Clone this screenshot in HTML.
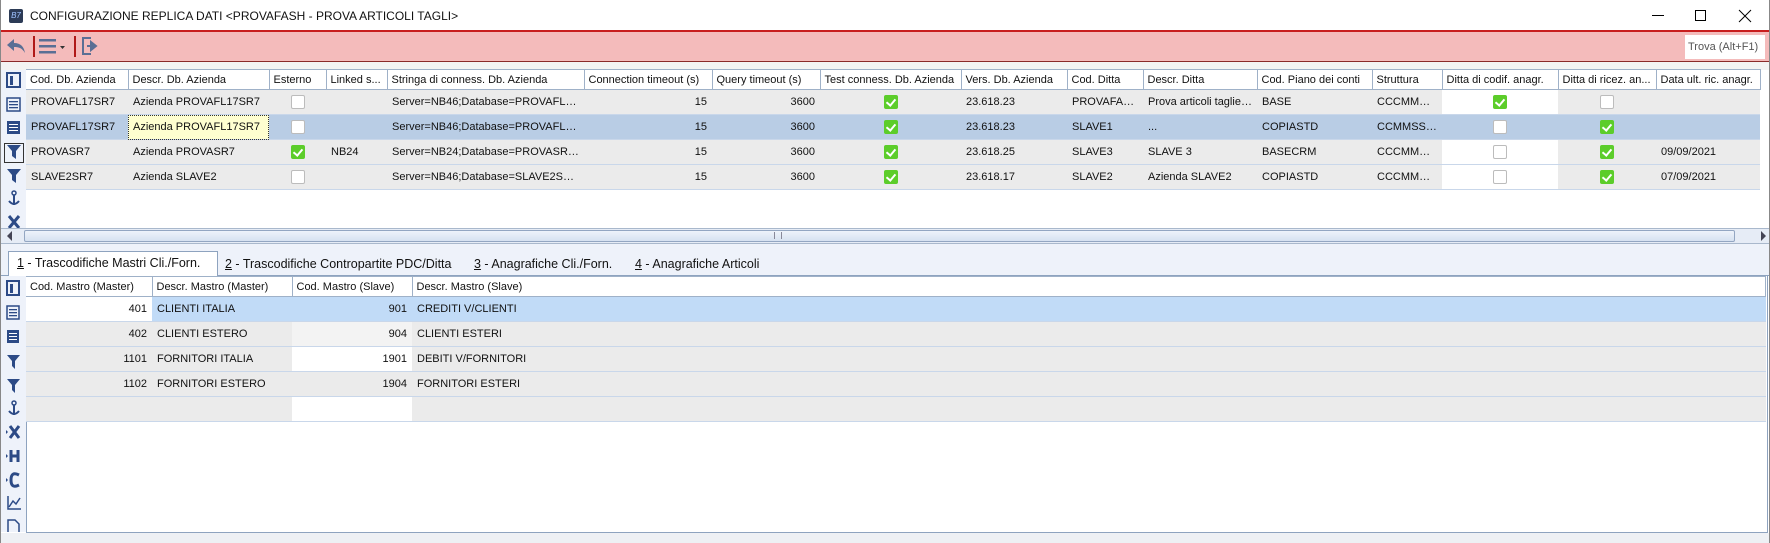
<!DOCTYPE html>
<html><head><meta charset="utf-8"><style>
*{margin:0;padding:0;box-sizing:border-box}
body{width:1770px;height:543px;overflow:hidden;background:#fff;font-family:"Liberation Sans",sans-serif;font-size:11px;color:#111;position:relative}
.abs{position:absolute;white-space:nowrap}
table{border-collapse:collapse;table-layout:fixed;position:absolute}
td{height:25px;padding:0 5px;white-space:nowrap;overflow:hidden;text-overflow:ellipsis;border-bottom:1px solid #c9d7ea;background:#ebebeb}
th{height:20px;padding:0 4px;text-align:left;font-weight:normal;white-space:nowrap;overflow:hidden;text-overflow:ellipsis;background:#fff;border-right:1px solid #9fb1c8;border-bottom:1px solid #9fb1c8;border-top:1px solid #9fb1c8}
.r{text-align:right}.c{text-align:center}
tr.sel td{background:#b9cde5}
td.w{background:#fff}
.cb{display:inline-block;width:14px;height:14px;border:1px solid #bcbcbc;background:#fff;border-radius:2px;vertical-align:middle}
.ck{display:inline-block;width:14px;height:14px;background:#5ccd2a;border-radius:2px;vertical-align:middle;position:relative}
.ck:after{content:"";position:absolute;left:4px;top:2px;width:4px;height:7px;border:solid #fff;border-width:0 2px 2px 0;transform:rotate(40deg)}
</style></head><body>
<div class="abs" style="left:9px;top:9px;width:14px;height:14px;background:#2c3b56;border-radius:2px;color:#9fc3ff;font-size:8px;line-height:14px;text-align:center;font-style:italic">B7</div>
<div class="abs" style="left:30px;top:9px;font-size:12px">CONFIGURAZIONE REPLICA DATI &lt;PROVAFASH - PROVA ARTICOLI TAGLI&gt;</div>
<div class="abs" style="left:1652px;top:15px;width:12px;height:1px;background:#000"></div>
<div class="abs" style="left:1695px;top:10px;width:11px;height:11px;border:1px solid #000"></div>
<svg class="abs" style="left:1738px;top:9px" width="14" height="14"><path d="M1 1L13 13M13 1L1 13" stroke="#000" stroke-width="1"/></svg>
<div class="abs" style="left:0;top:30px;width:1770px;height:32px;background:#f4bbbb;border-top:2px solid #c81e1e;border-bottom:1px solid #8a2a2a;border-left:1px solid #c81e1e;border-right:1px solid #c81e1e"></div>
<svg class="abs" style="left:5px;top:37px" width="22" height="18"><path d="M9 2L2 8L9 14V10C14 10 17 11 20 16C19 10 16 6 9 6Z" fill="#5a6f95"/></svg>
<div class="abs" style="left:33px;top:36px;width:2px;height:21px;background:#b01818"></div>
<svg class="abs" style="left:39px;top:38px" width="28" height="16"><rect x="0" y="1" width="17" height="2.5" fill="#5a6f95"/><rect x="0" y="7" width="17" height="2.5" fill="#5a6f95"/><rect x="0" y="13" width="17" height="2.5" fill="#5a6f95"/><path d="M21 8h5l-2.5 3z" fill="#333"/></svg>
<div class="abs" style="left:74px;top:36px;width:2px;height:21px;background:#b01818"></div>
<svg class="abs" style="left:80px;top:36px" width="20" height="20"><path d="M11 2H3V18H11" fill="none" stroke="#5a6f95" stroke-width="2"/><path d="M7 10H14M11 6L16 10L11 14Z" fill="#5a6f95" stroke="#5a6f95" stroke-width="2"/></svg>
<div class="abs" style="left:1685px;top:35px;width:80px;height:24px;background:#fff;color:#555;font-size:11px;line-height:24px;padding-left:3px">Trova (Alt+F1)</div>
<div class="abs" style="left:0;top:62px;width:1770px;height:8px;background:#f3f3f3"></div>
<div class="abs" style="left:0;top:70px;width:26px;height:160px;background:#eef2fa"></div>
<div class="abs" style="left:4px;top:143px;width:20px;height:20px;border:1px solid #333"></div>
<svg class="abs" style="left:0;top:70px" width="26" height="160" fill="#2c4a86">
<rect x="7" y="3" width="13" height="14" fill="none" stroke="#2c4a86" stroke-width="2"/><rect x="10" y="6" width="3" height="9"/>
<rect x="7" y="28" width="13" height="13" fill="none" stroke="#2c4a86" stroke-width="1.5"/><rect x="9" y="31" width="9" height="1.3"/><rect x="9" y="34" width="9" height="1.3"/><rect x="9" y="37" width="9" height="1.3"/>
<rect x="7" y="51" width="13" height="13"/><rect x="9" y="54" width="9" height="1" fill="#fff"/><rect x="9" y="57" width="9" height="1" fill="#fff"/><rect x="9" y="60" width="9" height="1" fill="#fff"/>
<path d="M7 75H21L16 81V89L12 86V81Z"/><path d="M7 99H21L16 105V113L12 110V105Z"/>
<circle cx="14" cy="123" r="2" fill="none" stroke="#2c4a86" stroke-width="1.5"/><path d="M14 125V135M9 131Q14 137 19 131" fill="none" stroke="#2c4a86" stroke-width="2"/>
<path d="M9 146L19 158M19 146L9 158" stroke="#2c4a86" stroke-width="3"/>
</svg>
<table style="left:26px;top:69px;width:1734px">
<colgroup><col style="width:102px"><col style="width:141px"><col style="width:57px"><col style="width:61px"><col style="width:197px"><col style="width:128px"><col style="width:108px"><col style="width:141px"><col style="width:106px"><col style="width:76px"><col style="width:114px"><col style="width:115px"><col style="width:70px"><col style="width:116px"><col style="width:98px"><col style="width:104px"></colgroup>
<tr><th>Cod. Db. Azienda</th><th>Descr. Db. Azienda</th><th>Esterno</th><th>Linked s...</th><th>Stringa di conness. Db. Azienda</th><th>Connection timeout (s)</th><th>Query timeout (s)</th><th>Test conness. Db. Azienda</th><th>Vers. Db. Azienda</th><th>Cod. Ditta</th><th>Descr. Ditta</th><th>Cod. Piano dei conti</th><th>Struttura</th><th>Ditta di codif. anagr.</th><th>Ditta di ricez. an...</th><th>Data ult. ric. anagr.</th></tr>
<tr><td>PROVAFL17SR7</td><td>Azienda PROVAFL17SR7</td><td class="c"><span class="cb"></span></td><td></td><td>Server=NB46;Database=PROVAFL1...</td><td class="r">15</td><td class="r">3600</td><td class="c"><span class="ck"></span></td><td>23.618.23</td><td>PROVAFASH</td><td>Prova articoli taglie ...</td><td>BASE</td><td>CCCMMSSSS</td><td class="c w"><span class="ck"></span></td><td class="c"><span class="cb"></span></td><td></td></tr>
<tr class="sel"><td>PROVAFL17SR7</td><td style="background:#ffffd0;outline:1px dotted #333;outline-offset:-1px">Azienda PROVAFL17SR7</td><td class="c"><span class="cb"></span></td><td></td><td>Server=NB46;Database=PROVAFL1...</td><td class="r">15</td><td class="r">3600</td><td class="c"><span class="ck"></span></td><td>23.618.23</td><td>SLAVE1</td><td>...</td><td>COPIASTD</td><td>CCMMSSSSS</td><td class="c"><span class="cb"></span></td><td class="c"><span class="ck"></span></td><td></td></tr>
<tr><td>PROVASR7</td><td>Azienda PROVASR7</td><td class="c"><span class="ck"></span></td><td>NB24</td><td>Server=NB24;Database=PROVASR7...</td><td class="r">15</td><td class="r">3600</td><td class="c"><span class="ck"></span></td><td>23.618.25</td><td>SLAVE3</td><td>SLAVE 3</td><td>BASECRM</td><td>CCCMMSSSS</td><td class="c w"><span class="cb"></span></td><td class="c"><span class="ck"></span></td><td>09/09/2021</td></tr>
<tr><td>SLAVE2SR7</td><td>Azienda SLAVE2</td><td class="c"><span class="cb"></span></td><td></td><td>Server=NB46;Database=SLAVE2SR...</td><td class="r">15</td><td class="r">3600</td><td class="c"><span class="ck"></span></td><td>23.618.17</td><td>SLAVE2</td><td>Azienda SLAVE2</td><td>COPIASTD</td><td>CCCMMSSSS</td><td class="c w"><span class="cb"></span></td><td class="c"><span class="ck"></span></td><td>07/09/2021</td></tr>
</table>
<div class="abs" style="left:0;top:228px;width:1770px;height:16px;background:#e6ecf6;border-top:1px solid #a9b8cc;border-bottom:1px solid #a9b8cc"></div>
<div class="abs" style="left:24px;top:230px;width:1711px;height:12px;background:linear-gradient(#eef3fb,#d6e1f1);border:1px solid #93a6c2;border-radius:2px"></div>
<div class="abs" style="left:774px;top:232px;width:8px;height:7px;border-left:1px solid #889;border-right:1px solid #889"></div>
<svg class="abs" style="left:6px;top:230px" width="8" height="12"><path d="M6 1L1 6L6 11Z" fill="#445"/></svg>
<svg class="abs" style="left:1760px;top:230px" width="8" height="12"><path d="M1 1L6 6L1 11Z" fill="#445"/></svg>
<div class="abs" style="left:0;top:244px;width:1770px;height:32px;background:#eef2fa;border-bottom:1px solid #8ea3bf"></div>
<div class="abs" style="left:8px;top:251px;width:210px;height:26px;background:#fff;border:1px solid #8ea3bf;border-bottom:none"></div>
<div class="abs" style="left:17px;top:256px;font-size:12.5px"><u>1</u> - Trascodifiche Mastri Cli./Forn.</div>
<div class="abs" style="left:225px;top:257px;font-size:12.5px"><u>2</u> - Trascodifiche Contropartite PDC/Ditta</div>
<div class="abs" style="left:474px;top:257px;font-size:12.5px"><u>3</u> - Anagrafiche Cli./Forn.</div>
<div class="abs" style="left:635px;top:257px;font-size:12.5px"><u>4</u> - Anagrafiche Articoli</div>
<div class="abs" style="left:0;top:276px;width:26px;height:256px;background:#eef2fa"></div>
<svg class="abs" style="left:0;top:276px" width="26" height="256" fill="#2c4a86">
<rect x="7" y="5" width="12" height="14" fill="none" stroke="#2c4a86" stroke-width="2"/><rect x="10" y="8" width="3" height="9"/>
<rect x="7" y="30" width="12" height="13" fill="none" stroke="#2c4a86" stroke-width="1.5"/><rect x="9" y="33" width="8" height="1.3"/><rect x="9" y="36" width="8" height="1.3"/><rect x="9" y="39" width="8" height="1.3"/>
<rect x="7" y="54" width="12" height="13"/><rect x="9" y="57" width="8" height="1" fill="#fff"/><rect x="9" y="60" width="8" height="1" fill="#fff"/><rect x="9" y="63" width="8" height="1" fill="#fff"/>
<path d="M7 79H20L15 85V93L12 90V85Z"/><path d="M7 103H20L15 109V117L12 114V109Z"/>
<circle cx="14" cy="127" r="2" fill="none" stroke="#2c4a86" stroke-width="1.5"/><path d="M14 129V139M9 135Q14 141 19 135" fill="none" stroke="#2c4a86" stroke-width="2"/>
<path d="M6 154L8 156L6 158Z"/><path d="M10 150L19 162M19 150L10 162" stroke="#2c4a86" stroke-width="3"/>
<path d="M6 178L8 180L6 182Z"/><path d="M11 174V186M18 174V186M11 180H18" stroke="#2c4a86" stroke-width="3"/>
<path d="M6 202L8 204L6 206Z"/><path d="M19 199Q11 195 11 204Q11 213 19 209" fill="none" stroke="#2c4a86" stroke-width="3"/>
<path d="M8 220V233H21" fill="none" stroke="#2c4a86" stroke-width="1.5"/><path d="M9 231L13 225L16 228L20 222" fill="none" stroke="#2c4a86" stroke-width="1.5"/>
<path d="M8 256V244H15L19 248V256" fill="none" stroke="#2c4a86" stroke-width="1.5"/>
</svg>
<div class="abs" style="left:26px;top:276px;width:1742px;height:257px;border:1px solid #8ea3bf;border-top:none"></div>
<table style="left:26px;top:276px;width:1740px">
<colgroup><col style="width:126px"><col style="width:140px"><col style="width:120px"><col></colgroup>
<tr><th>Cod. Mastro (Master)</th><th>Descr. Mastro (Master)</th><th>Cod. Mastro (Slave)</th><th>Descr. Mastro (Slave)</th></tr>
<tr><td class="r w">401</td><td style="background:#c1dbf7">CLIENTI ITALIA</td><td class="r" style="background:#c1dbf7">901</td><td style="background:#c1dbf7">CREDITI V/CLIENTI</td></tr>
<tr><td class="r">402</td><td>CLIENTI ESTERO</td><td class="r" style="background:#f3f3f3">904</td><td>CLIENTI ESTERI</td></tr>
<tr><td class="r">1101</td><td>FORNITORI ITALIA</td><td class="r w">1901</td><td>DEBITI V/FORNITORI</td></tr>
<tr><td class="r">1102</td><td>FORNITORI ESTERO</td><td class="r">1904</td><td>FORNITORI ESTERI</td></tr>
<tr><td></td><td></td><td class="w"></td><td></td></tr>
</table>
<div class="abs" style="left:0;top:533px;width:1770px;height:10px;background:#eef0f4"></div>
<div class="abs" style="left:0;top:0;width:1px;height:543px;background:#888"></div>
<div class="abs" style="left:1769px;top:0;width:1px;height:543px;background:#888"></div>
</body></html>
